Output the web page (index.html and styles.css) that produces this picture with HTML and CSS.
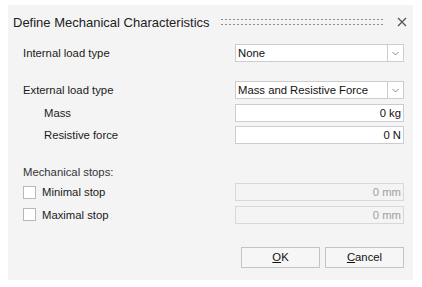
FILE: index.html
```html
<!DOCTYPE html>
<html lang="en">
<head>
<meta charset="UTF-8">
<meta name="viewport" content="width=device-width, initial-scale=1.0">
<title>Define Mechanical Characteristics</title>
<link rel="stylesheet" href="styles.css">
</head>
<body>

<div class="dialog">
  <div class="titlebar">
    <span class="title">Define Mechanical Characteristics</span>
    <span class="grip"></span>
    <span class="close">
      <svg width="10" height="10" viewBox="0 0 10 10"><path d="M1 1 L9 9 M9 1 L1 9" stroke="#555" stroke-width="1.3"/></svg>
    </span>
  </div>

  <div class="form">
    <div class="row">
      <label class="label">Internal load type</label>
      <div class="select">
        <div class="field">None</div>
        <div class="drop"><svg width="7" height="5" viewBox="0 0 7 5"><path d="M0.5 1 L3.5 4 L6.5 1" fill="none" stroke="#888" stroke-width="1"/></svg></div>
      </div>
    </div>

    <div class="row gap-big">
      <label class="label">External load type</label>
      <div class="select">
        <div class="field">Mass and Resistive Force</div>
        <div class="drop"><svg width="7" height="5" viewBox="0 0 7 5"><path d="M0.5 1 L3.5 4 L6.5 1" fill="none" stroke="#888" stroke-width="1"/></svg></div>
      </div>
    </div>
    <div class="row">
      <label class="label sub">Mass</label>
      <div class="field num">0 kg</div>
    </div>
    <div class="row">
      <label class="label sub">Resistive force</label>
      <div class="field num">0 N</div>
    </div>

    <div class="section-title">Mechanical stops:</div>
    <div class="row first">
      <label class="label check"><span class="box"></span>Minimal stop</label>
      <div class="field num disabled">0 mm</div>
    </div>
    <div class="row">
      <label class="label check"><span class="box"></span>Maximal stop</label>
      <div class="field num disabled">0 mm</div>
    </div>

    <div class="buttons">
      <button class="btn"><u>O</u>K</button>
      <button class="btn"><u>C</u>ancel</button>
    </div>
  </div>
</div>

</body>
</html>
```

FILE: styles.css
```css
body {
  margin: 0;
  background: #fff;
  font-family: "Liberation Sans", Arial, sans-serif;
  color: #1a1a1a;
}
.dialog {
  margin: 5px 0 0 8px;
  width: 405px;
  height: 275px;
  background: #f4f4f4;
}
.titlebar {
  display: flex;
  align-items: center;
  height: 34px;
  padding: 0 4px 0 5px;
}
.title {
  font-size: 13px;
  color: #222;
  white-space: nowrap;
}
.grip {
  flex: 1;
  height: 10px;
  margin: 0 13px 0 10px;
  background-image: radial-gradient(circle, #8e8e8e 0.8px, transparent 1.1px);
  background-size: 4px 5px;
  background-position: 0 0;
}
.close {
  display: flex;
  align-items: center;
  width: 12px;
  height: 12px;
}
.form {
  padding: 5px 9px 0 15px;
  font-size: 11.3px;
}
.row {
  display: grid;
  grid-template-columns: 212px 169px;
  align-items: center;
  height: 18px;
  margin-top: 4.5px;
}
.row:first-child,
.row.first {
  margin-top: 0;
}
.row.gap-big {
  margin-top: 19px;
}
.label {
  display: flex;
  align-items: center;
}
.label.sub {
  padding-left: 21px;
}
.select {
  display: flex;
  height: 18px;
}
.field {
  flex: 1;
  height: 18px;
  box-sizing: border-box;
  border: 1px solid #cdcdcd;
  background: #fff;
  padding: 0 2px;
  line-height: 16px;
  white-space: nowrap;
  color: #111;
}
.field.num {
  text-align: right;
}
.field.disabled {
  background: #f4f4f4;
  border-color: #d8d8d8;
  color: #a0a0a0;
}
.drop {
  width: 16px;
  height: 18px;
  box-sizing: border-box;
  border: 1px solid #cdcdcd;
  border-left: none;
  background: #fff;
  display: flex;
  align-items: center;
  justify-content: center;
}
.section-title {
  margin-top: 21px;
  height: 14px;
  line-height: 14px;
  margin-bottom: 4px;
  color: #333;
}
.box {
  width: 13px;
  height: 13px;
  box-sizing: border-box;
  border: 1px solid #b8b8b8;
  background: #fff;
  margin-right: 6px;
}
.buttons {
  display: flex;
  justify-content: flex-end;
  gap: 5px;
  margin-top: 23px;
  width: 381px;
}
.btn {
  width: 79px;
  height: 21px;
  font-family: inherit;
  font-size: 11.3px;
  color: #111;
  background: #f6f6f6;
  border: 1px solid #c4c4c4;
  padding: 0;
}
```
